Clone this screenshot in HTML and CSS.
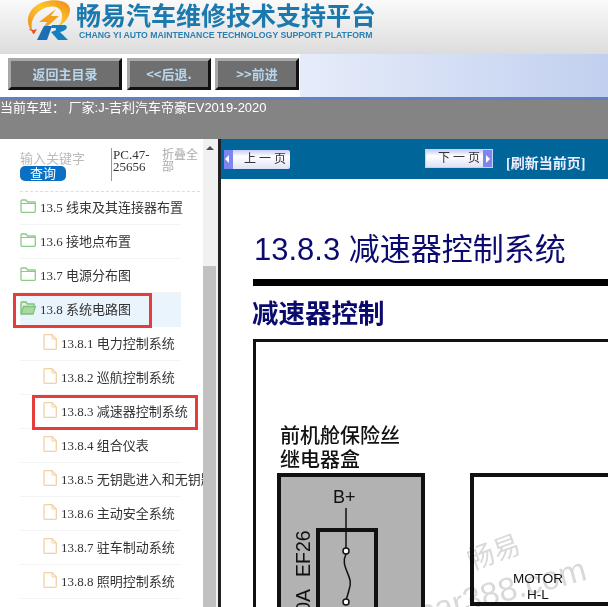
FILE: index.html
```html
<!DOCTYPE html>
<html>
<head>
<meta charset="utf-8">
<title>畅易汽车维修技术支持平台</title>
<link rel="stylesheet" href="styles.css">
</head>
<body>

<svg class="defs" width="0" height="0">
  <symbol id="folder" viewBox="0 0 16 14"><path d="M1 12.5V2a1 1 0 0 1 1-1h4l1.5 2h7a.8.8 0 0 1 .8.8v8.700a.8.8 0 0 1-.8.8H1.800a.8.8 0 0 1-.8-.8z" fill="#fff" stroke="#8ccb87" stroke-width="1.3"/><path d="M1 4.500h14.300" stroke="#8ccb87"/></symbol>
  <symbol id="folderopen" viewBox="0 0 16 14"><path d="M1 12V2a1 1 0 0 1 1-1h4l1.5 2H14v2" fill="#dff0d8" stroke="#7fc07a" stroke-width="1.3"/><path d="M1 13 3.500 5.500H15.500L13 13z" fill="#a9d8a3" stroke="#7fc07a" stroke-width="1.3"/></symbol>
  <symbol id="page" viewBox="0 0 14 16"><path d="M1 1.500a.8.8 0 0 1 .8-.8H9L13.300 5v9.500a.8.8 0 0 1-.8.8H1.800a.8.8 0 0 1-.8-.8z" fill="#fff" stroke="#f3d0a4" stroke-width="1.3"/><path d="M9 1v4h4.300" fill="none" stroke="#f3d0a4"/></symbol>
  <linearGradient id="ring" x1="0" y1="1" x2="1" y2="0">
    <stop offset="0" stop-color="#ef8a1a"/>
    <stop offset=".55" stop-color="#fbc62f"/>
    <stop offset="1" stop-color="#f08a14"/>
  </linearGradient>
</svg>

<header class="top">
  <svg class="logo" width="50" height="42" viewBox="0 0 50 42">
    <path d="M8 33C-2 22 3 6 20 1.500 34-2 46 2 45 11 44 19 38 24 33 27 38 20 39 12 33 8 25 4 14 9 9 17 6 22 6 28 8 33z" fill="url(#ring)"/>
    <path d="M31 9 14 22h8l-7 11 19-17h-8z" fill="#f3a21f"/>
    <path d="M3 29l6 1 3-1-3 5-1 0-1-3z" fill="#e4511e"/>
    <path d="M12 40l7-14h8l-5 14z" fill="#1a6fb8"/>
    <path d="M27 25h13c4 2 1 6-5 7l8 8H33l-7-8 3-1c2 0 3-3 1-3h-4z" fill="#1380c4"/>
  </svg>
  <div class="brand">
    <div class="brand-cn">畅易汽车维修技术支持平台</div>
    <div class="brand-en">CHANG YI AUTO MAINTENANCE TECHNOLOGY SUPPORT PLATFORM</div>
  </div>
</header>

<nav class="toolbar">
  <div class="navgroup">
    <a class="navbtn home">返回主目录</a>
    <a class="navbtn back">&lt;&lt;后退.</a>
    <a class="navbtn forward">&gt;&gt;前进</a>
  </div>
</nav>

<div class="carbar">当前车型： 厂家:J-吉利汽车帝豪EV2019-2020</div>

<div class="main">
  <aside class="side">
    <div class="tree">
      <div class="search">
        <div class="search-key">
          <div class="hint">输入关键字</div>
          <div class="query">查询</div>
        </div>
        <div class="code">PC.47-25656</div>
        <div class="fold">折叠全部</div>
      </div>

      <div class="row"><svg class="ico"><use href="#folder"/></svg>13.5 线束及其连接器布置</div>
      <div class="row"><svg class="ico"><use href="#folder"/></svg>13.6 接地点布置</div>
      <div class="row"><svg class="ico"><use href="#folder"/></svg>13.7 电源分布图</div>
      <div class="row open"><svg class="ico"><use href="#folderopen"/></svg>13.8 系统电路图<span class="mark mark-a"></span></div>
      <div class="row sub"><svg class="ico"><use href="#page"/></svg>13.8.1 电力控制系统</div>
      <div class="row sub"><svg class="ico"><use href="#page"/></svg>13.8.2 巡航控制系统</div>
      <div class="row sub"><svg class="ico"><use href="#page"/></svg>13.8.3 减速器控制系统<span class="mark mark-b"></span></div>
      <div class="row sub"><svg class="ico"><use href="#page"/></svg>13.8.4 组合仪表</div>
      <div class="row sub"><svg class="ico"><use href="#page"/></svg>13.8.5 无钥匙进入和无钥匙启动</div>
      <div class="row sub"><svg class="ico"><use href="#page"/></svg>13.8.6 主动安全系统</div>
      <div class="row sub"><svg class="ico"><use href="#page"/></svg>13.8.7 驻车制动系统</div>
      <div class="row sub"><svg class="ico"><use href="#page"/></svg>13.8.8 照明控制系统</div>
    </div>
    <div class="scroll">
      <div class="arrow"></div>
      <div class="thumb"></div>
    </div>
  </aside>

  <section class="doc">
    <div class="pager">
      <a class="pagebtn prev"><span class="tip tip-l"></span>上 一 页</a>
      <a class="pagebtn next">下 一 页<span class="tip tip-r"></span></a>
      <a class="refresh">[刷新当前页]</a>
    </div>
    <div class="content">
      <h1>13.8.3 减速器控制系统</h1>
      <h2>减速器控制</h2>
      <div class="figure">
        <svg class="schem" width="355" height="267" viewBox="0 0 355 267">
          <text class="cap" x="24" y="101">前机舱保险丝</text>
          <text class="cap" x="24" y="125">继电器盒</text>
          <rect x="23" y="133" width="144" height="150" fill="#b2b2b2" stroke="#111" stroke-width="4"/>
          <text class="bplus" x="77" y="161">B+</text>
          <rect x="62" y="188" width="58" height="90" fill="#b2b2b2" stroke="#111" stroke-width="4"/>
          <path d="M90 166V206" stroke="#111" stroke-width="1.5"/>
          <path d="M90 212c-7 14 9 22 3 36-1 5-3 8-3 12" fill="none" stroke="#111" stroke-width="1.5"/>
          <circle cx="90" cy="209" r="3" fill="#fff" stroke="#111" stroke-width="1.5"/>
          <circle cx="90" cy="260" r="3" fill="#fff" stroke="#111" stroke-width="1.5"/>
          <text class="vert" transform="translate(54 235) rotate(-90)">EF26</text>
          <text class="vert vert-end" transform="translate(54 247) rotate(-90)">0A</text>
          <path d="M360 133H216V262H360" fill="#fff" stroke="#111" stroke-width="4"/>
          <text class="motor" x="282" y="241">MOTOR</text>
          <text class="motor" x="282" y="257">H-L</text>
        </svg>
        <div class="wm wm-cn">畅易</div>
        <div class="wm wm-en">car388.com</div>
      </div>
    </div>
  </section>
</div>

</body>
</html>
```

FILE: styles.css
```css
* {box-sizing: border-box;}

html, body {
  margin: 0;
  height: 100%;
  overflow: hidden;
}

body {
  background: #848484;
  font-family: "Liberation Serif", "Noto Sans CJK SC", serif;
  font-size: 13px;
}

.defs {position: absolute;}

.top {
  height: 54px;
  background: linear-gradient(#fafafa, #dcdcdc);
  display: flex;
  padding-left: 25px;
  gap: 1px;
}

.brand-cn {
  font-family: "Noto Sans CJK SC", sans-serif;
  font-weight: 700;
  font-size: 25px;
  line-height: 30px;
  color: #1b79ad;
  margin-top: -1px;
}

.brand-en {
  font-family: "Liberation Sans", sans-serif;
  font-weight: 700;
  font-size: 8.7px;
  line-height: 11px;
  margin: 1px 0 0 3px;
  color: #2a80b4;
  white-space: nowrap;
}

.toolbar {
  height: 46px;
  background: linear-gradient(90deg, #e6ecfa 300px, #c2d0ef 100%);
  border-bottom: 3px solid #5f80c6;
}

.navgroup {
  width: 300px;
  height: 43px;
  background: #fff;
  padding: 4px 0 0 8px;
  display: flex;
  gap: 5px;
}

.navbtn {
  height: 32px;
  background: #6f6f6f;
  border: 3px solid;
  border-color: #a8a8a8 #111 #111 #a8a8a8;
  color: #b7d6ee;
  font-family: "Noto Sans CJK SC", sans-serif;
  font-weight: 700;
  font-size: 13px;
  line-height: 26px;
  text-align: center;
}

.home {width: 114px;}
.back {width: 84px;}
.forward {width: 84px; margin-left: -1px;}

.carbar {
  height: 39px;
  color: #fff;
  font-family: "Liberation Sans", "Noto Sans CJK SC", sans-serif;
  font-size: 13px;
  line-height: 16px;
  white-space: nowrap;
}

.main {
  display: flex;
  height: 468px;
}

.side {
  width: 221px;
  background: #fff;
  border-right: 3px solid #222;
  display: flex;
  position: relative;
}

.tree {
  width: 203px;
  overflow: hidden;
  padding-left: 20px;
}

.search {
  height: 53px;
  margin-right: 3px;
  padding-top: 9px;
  border-bottom: 1px dashed #ddd;
  display: flex;
}

.search-key {width: 91px; padding-top: 3px;}

.hint {
  color: #bbb;
  line-height: 15px;
}

.query {
  width: 46px;
  height: 15px;
  background: #0a70c4;
  border-radius: 5px;
  color: #fff;
  line-height: 15px;
  text-align: center;
}

.code {
  width: 51px;
  height: 33px;
  padding: 1px 0 0 1px;
  border-left: 1px solid #999;
  color: #333;
  line-height: 12px;
}

.fold {
  width: 38px;
  flex: none;
  color: #aaa;
  font-size: 12px;
  line-height: 12px;
  padding-top: 1px;
}

.row {
  width: 161px;
  height: 34px;
  padding-bottom: 3px;
  display: flex;
  align-items: center;
  gap: 4px;
  color: #333;
  white-space: nowrap;
  border-bottom: 1px solid #f3f3f3;
  position: relative;
  top: -1px;
}

.row.open {background: #eaf4fc; border-bottom-color: #eaf4fc;}
.row.sub {padding-left: 23px;}

.ico {width: 16px; height: 14px; flex: none;}
.sub .ico {width: 14px; height: 16px;}

.mark {
  position: absolute;
  border: 3px solid #e53c3c;
}

.mark-a {left: -7px; top: 0; width: 139px; height: 35px;}
.mark-b {left: 12px; top: 0; width: 166px; height: 35px;}

.scroll {
  width: 15px;
  background: #f1f1f1;
  position: relative;
}

.arrow {
  position: absolute;
  left: 3px;
  top: 7px;
  border: 4px solid transparent;
  border-top: 0;
  border-bottom: 4px solid #505050;
}

.thumb {
  position: absolute;
  left: 0;
  top: 127px;
  bottom: 0;
  width: 13px;
  background: #c1c1c1;
}

.doc {
  flex: 1;
  min-width: 0;
  background: #fff;
  overflow: hidden;
}

.pager {
  height: 40px;
  background: #006699;
  position: relative;
}

.pagebtn {
  position: absolute;
  height: 19px;
  background: linear-gradient(#c9cdf5, #fff 35%, #dfe2f8);
  color: #333;
  font-size: 12px;
  line-height: 19px;
  white-space: nowrap;
  display: flex;
  align-items: center;
}

.prev {left: 3px; top: 11px; width: 66px; gap: 11px; border-radius: 2px;}
.next {left: 204px; top: 10px; width: 68px; padding-left: 12px; justify-content: space-between; border: 1px solid #c7d0f5;}

.tip {
  width: 9px;
  height: 100%;
  background: #7c86ee;
  position: relative;
  flex: none;
}

.tip-l:after, .tip-r:after {
  content: "";
  position: absolute;
  top: 5px;
  border: 4px solid transparent;
}

.tip-l:after {left: -3px; border-right-color: #fff;}
.tip-r:after {left: 3px; border-left-color: #fff;}

.refresh {
  position: absolute;
  left: 285px;
  top: 17px;
  color: #eef;
  font-size: 14px;
  font-weight: 700;
  line-height: 16px;
  white-space: nowrap;
}

.content {padding-left: 32px;}

h1, h2 {
  margin: 0;
  color: #0b0b6f;
  font-family: "Liberation Sans", "Noto Sans CJK SC", sans-serif;
  white-space: nowrap;
}

h1 {
  margin-top: 51px;
  height: 56px;
  border-bottom: 7px solid #000;
  font-weight: 400;
  font-size: 31px;
  line-height: 40px;
  padding-left: 1px;
}

h2 {
  font-size: 26.5px;
  line-height: 36px;
  margin-top: 10px;
  margin-left: -1px;
}

.figure {
  margin-top: 7px;
  height: 300px;
  border: 3px solid #111;
  border-right: 0;
  position: relative;
}

.schem {display: block;}

.schem text {
  font-family: "Liberation Sans", "Noto Sans CJK SC", sans-serif;
  fill: #111;
}

.schem .cap {font-size: 20px; font-weight: 500;}
.schem .bplus {font-size: 18px;}
.schem .vert {font-size: 19.5px;}
.schem .vert-end {text-anchor: end;}
.schem .motor {font-size: 13.5px; text-anchor: middle;}

.wm {
  position: absolute;
  color: #d9d9d9;
  white-space: nowrap;
  font-family: "Liberation Sans", "Noto Sans CJK SC", sans-serif;
  mix-blend-mode: multiply;
}

.wm-cn {left: 210px; top: 189px; font-size: 27px; transform: rotate(-20deg);}
.wm-en {left: 160px; top: 230px; font-size: 33px; transform: rotate(-15deg);}
```
